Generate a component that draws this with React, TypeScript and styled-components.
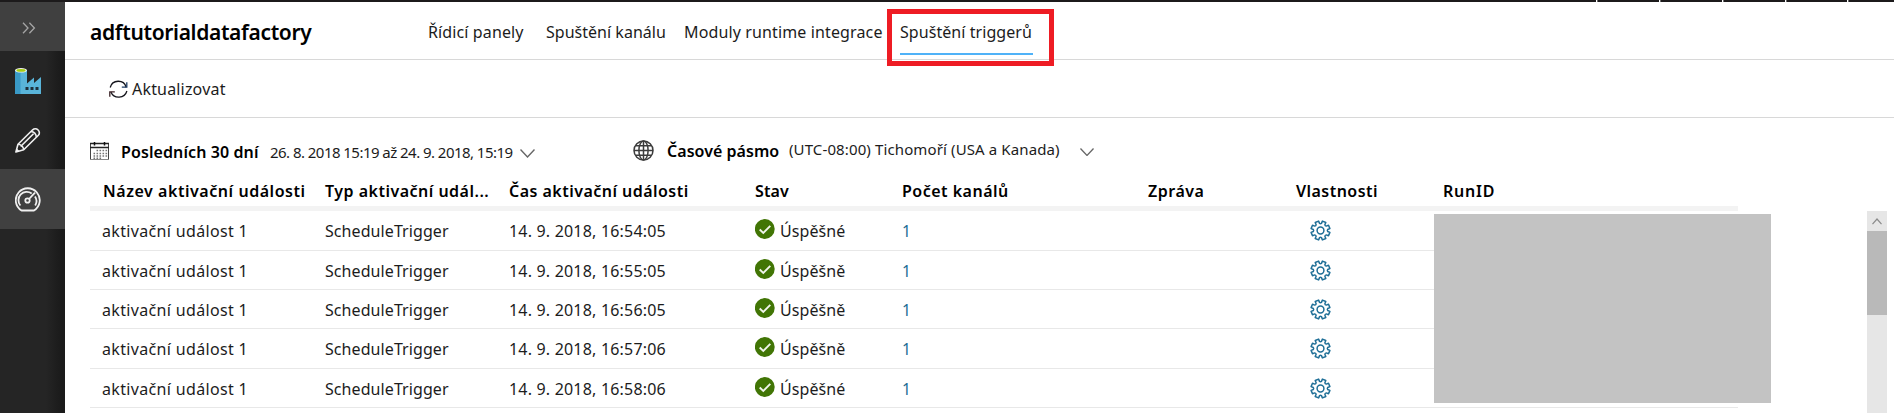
import React from 'react';
import styled, { createGlobalStyle } from 'styled-components';

const GlobalStyle = createGlobalStyle`
  * { box-sizing: border-box; }
  body {
    margin: 0;
    overflow: hidden;
    background: #fff;
    color: #1c1c1c;
    font-family: "Noto Sans", "Open Sans", sans-serif;
    font-size: 16px;
    line-height: 20px;
  }
  svg { display: block; flex: none; }
`;

const Page = styled.div`
  display: flex;
  flex-direction: column;
  height: 413px;
  overflow: hidden;
`;

const TopStrip = styled.div`
  flex: none;
  display: flex;
  justify-content: flex-end;
  height: 2px;
  background: #1c1a1b;
`;

const StripSegment = styled.div<{ $width: number }>`
  width: ${(p) => p.$width}px;
  border-left: 1px solid #fff;
  box-shadow: inset 1px 0 #6d6d6d;
`;

const Shell = styled.div`
  flex: 1;
  display: flex;
  min-height: 0;
`;

const Sidebar = styled.nav`
  flex: none;
  width: 65px;
  background: linear-gradient(to right, #252525 46px, #1a1a1a 62px);
`;

const NavItem = styled.div<{ $height: number; $top: number; $left?: number; $active?: boolean }>`
  height: ${(p) => p.$height}px;
  padding: ${(p) => p.$top}px 0 0 ${(p) => p.$left ?? 15}px;
  background: ${(p) => (p.$active ? '#404040' : 'transparent')};
`;

const Main = styled.main`
  flex: 1;
  min-width: 0;
  display: flex;
  flex-direction: column;
`;

const Header = styled.header`
  flex: none;
  display: flex;
  height: 58px;
  border-bottom: 1px solid #d8d8d8;
`;

const Title = styled.h1`
  width: 363px;
  margin: 0;
  padding: 15px 0 0 25px;
  font-size: 21px;
  font-weight: 600;
  line-height: 30px;
  letter-spacing: -0.34px;
  color: #000;
`;

const Tab = styled.div<{ $width: number; $tracking: number; $selected?: boolean }>`
  position: relative;
  width: ${(p) => p.$width}px;
  height: 33px;
  margin-top: 20px;
  border-bottom: 2px solid ${(p) => (p.$selected ? '#4fb2f8' : 'transparent')};
  letter-spacing: ${(p) => p.$tracking}px;
  white-space: nowrap;
`;

const Highlight = styled.div`
  position: absolute;
  top: -13px;
  left: -13px;
  width: 167px;
  height: 57px;
  border: 5px solid #ee1c24;
  z-index: 1;
`;

const Toolbar = styled.div`
  flex: none;
  display: flex;
  height: 58px;
  padding: 19px 0 0 44px;
  border-bottom: 1px solid #d8d8d8;
`;

const ToolbarLabel = styled.span`
  margin-left: 4px;
  letter-spacing: 0.18px;
`;

const Filters = styled.div`
  flex: none;
  display: flex;
  align-items: flex-start;
  height: 61px;
  padding: 22px 0 0 25px;
  white-space: nowrap;
`;

const Filter = styled.div<{ $width: number }>`
  display: flex;
  align-items: flex-start;
  width: ${(p) => p.$width}px;
`;

const FilterIcon = styled.div<{ $top: number; $width: number }>`
  flex: none;
  width: ${(p) => p.$width}px;
  padding-top: ${(p) => p.$top}px;
`;

const FilterName = styled.span<{ $width: number; $top: number; $tracking: number }>`
  flex: none;
  width: ${(p) => p.$width}px;
  padding-top: ${(p) => p.$top}px;
  font-weight: 600;
  letter-spacing: ${(p) => p.$tracking}px;
  color: #000;
`;

const FilterValue = styled.span<{ $width: number; $top: number; $tracking: number }>`
  flex: none;
  width: ${(p) => p.$width}px;
  margin-top: ${(p) => p.$top}px;
  font-size: 15px;
  letter-spacing: ${(p) => p.$tracking}px;
`;

const Content = styled.div`
  flex: 1;
  position: relative;
  display: flex;
  justify-content: space-between;
  padding: 0 7px 0 25px;
  min-height: 0;
`;

const Table = styled.div`
  width: 1648px;
`;

const columns = `
  display: grid;
  grid-template-columns: 223px 184px 246px 147px 246px 148px 147px 1fr;
  padding-left: 12px;
  white-space: nowrap;
`;

const HeadRow = styled.div`
  ${columns}
  height: 32px;
  padding-top: 2px;
  border-bottom: 5px solid #f3f3f3;
  font-weight: 600;
  color: #000;
`;

const HeadCell = styled.div<{ $tracking: number; $indent?: number }>`
  padding-left: ${(p) => p.$indent ?? 0}px;
  letter-spacing: ${(p) => p.$tracking}px;
`;

const Row = styled.div`
  ${columns}
  height: 39px;
  border-bottom: 1px solid #e8e8e8;
  &:nth-child(3n + 2) { height: 40px; }
`;

const Cell = styled.div<{ $tracking?: number }>`
  padding-top: 10px;
  letter-spacing: ${(p) => p.$tracking ?? 0}px;
`;

const StatusCell = styled.div`
  display: flex;
  padding-top: 8px;
`;

const StatusText = styled.span`
  padding: 2px 0 0 5px;
  letter-spacing: 0.09px;
`;

const CountLink = styled.a`
  padding: 10px 0 0;
  font-size: 15.5px;
  color: #1b6c94;
`;

const GearCell = styled.div`
  padding: 9px 0 0 14px;
`;

const Redaction = styled.div`
  position: absolute;
  top: 35px;
  left: 1369px;
  width: 337px;
  height: 189px;
  background: #c3c3c3;
`;

const Scrollbar = styled.div`
  width: 20px;
  margin-top: 32px;
  background: #e6e6e6;
`;

const ScrollUp = styled.div`
  height: 20px;
  padding: 7px 0 0 5px;
`;

const ScrollThumb = styled.div`
  height: 84px;
  background: #b9b9b9;
`;

const ExpandIcon = () => (
  <svg width="14" height="12" viewBox="0 0 14 12" fill="none" stroke="#a5a5a5" strokeWidth="1.3">
    <path d="M1 .7 6 6 1 11.3M7.4.7l5 5.3-5 5.3" />
  </svg>
);

const FactoryIcon = () => (
  <svg width="26" height="26" viewBox="0 0 26 26">
    <path d="M0 2h12v24H0z" fill="#3999c6" />
    <path d="M5.5 2H12v13.5l7-6V15l7-6v17H5.5z" fill="#59b4d9" />
    <ellipse cx="6" cy="2.3" rx="6" ry="2.3" fill="#f2f2f2" />
    <ellipse cx="6" cy="2.4" rx="4.6" ry="1.4" fill="#a4cd12" />
    <path d="M10.5 19h3v3h-3zM15.5 19h3v3h-3zM20.5 19h3v3h-3z" fill="#1e2f3a" />
  </svg>
);

const PencilIcon = () => (
  <svg width="26" height="25" viewBox="0 0 26 25" fill="none" stroke="#f0f0f0" strokeWidth="1.6" strokeLinejoin="round">
    <path d="M.9 24 3 16.2 17.7 1.8C19 .6 21.5.5 23.1 2c1.6 1.6 1.7 3.9.3 5.3L8.7 21.8z" />
    <path d="M3 16.2c2.5 0 5.7 2.6 5.7 5.6M16 3.5c2.6.3 5 2.5 5.4 5.4M5.6 18.5 18.5 5.8" />
    <path d="M1.5 21.4l2.2 2" />
  </svg>
);

const GaugeIcon = () => (
  <svg width="26" height="25" viewBox="0 0 26 25" fill="none" stroke="#f0f0f0" strokeWidth="1.8">
    <path d="M6.5 23.5a12 12 0 1 1 12.5 0z" strokeLinejoin="round" />
    <path d="M5.4 18.5a8.3 8.3 0 0 1 11.3-12M20 9.5a8.3 8.3 0 0 1 .2 9" />
    <circle cx="12.5" cy="13.5" r="2.2" />
    <path d="M14 12 20 5.6" />
  </svg>
);

const RefreshIcon = () => (
  <svg width="19" height="21" viewBox="0 -1 19 21" fill="none" stroke="#15151c" strokeWidth="1.3">
    <path d="M1.2 7.5a8.3 8.3 0 0 1 16-.3M17.9 11a8.5 8.5 0 0 1-16 .9" />
    <path d="M17.8 2.2v5h-5" stroke="#1d3a63" />
    <path d="M.8 16.8v-5h5" stroke="#3b2226" />
  </svg>
);

const CalendarIcon = () => (
  <svg width="19" height="18" viewBox="0 0 19 18" fill="none">
    <path d="M.5 17.5v-16h18v16" stroke="#444" />
    <path d="M0 17.5h19" stroke="#888" />
    <path d="M0 1.5h19M0 5.5h19" stroke="#222" strokeWidth="1.3" />
    <path d="M4.500 0v3.500M14.500 0v3.500" stroke="#111" strokeWidth="1.5" />
    <path d="M6.500 8.500h11M3.500 11.500h14M3.500 14h14M3.500 16.300h9" stroke="#777" strokeWidth="1.5" strokeDasharray="1.6 1.4" />
  </svg>
);

const GlobeIcon = () => (
  <svg width="21" height="21" viewBox="0 0 21 21" fill="none" stroke="#3c3c3c" strokeWidth="1.5">
    <circle cx="10.5" cy="10.5" r="9.5" />
    <ellipse cx="10.5" cy="10.5" rx="4.6" ry="9.5" />
    <path d="M10.5 1v19M1 10.5h19M2.5 5.8h16M2.5 15.2h16" />
  </svg>
);

const ChevronDown = ({ width = 15 }: { width?: number }) => (
  <svg width={width} height={width * 0.6} viewBox="0 0 15 9" fill="none" stroke="#666" strokeWidth="1.4">
    <path d="M.5.6l7 7.4 7-7.4" />
  </svg>
);

const CheckIcon = () => (
  <svg width="20" height="20" viewBox="0 0 20 20">
    <circle cx="9.8" cy="10" r="9.9" fill="#417505" />
    <path d="M4.7 10.5l3.6 3.5 7-7.2" fill="none" stroke="#f1f5ec" strokeWidth="1.9" />
  </svg>
);

// Outline of an eight-toothed gear, built around the centre of a 21px box.
const gearPath = Array.from({ length: 8 }, (_, i) => {
  const at = (r: number, deg: number) => {
    const a = ((i * 45 + 22.5 + deg) * Math.PI) / 180;
    return `${(10.5 + r * Math.cos(a)).toFixed(2)} ${(10.5 + r * Math.sin(a)).toFixed(2)}`;
  };
  return `${i ? 'L' : 'M'}${at(7.2, -15)}L${at(9.6, -11)}L${at(9.6, 11)}L${at(7.2, 15)}Q${at(6.5, 22.5)} ${at(7.2, 30)}`;
}).join('') + 'Z';

const GearIcon = () => (
  <svg width="21" height="21" viewBox="0 0 21 21" fill="none" stroke="#1f6f97" strokeWidth="1.5" strokeLinejoin="round">
    <path d={gearPath} />
    <circle cx="10.5" cy="10.5" r="3.4" />
  </svg>
);

const ScrollArrow = () => (
  <svg width="10" height="7" viewBox="0 0 10 7" fill="none" stroke="#8b8b8b" strokeWidth="1.2">
    <path d="M.5 6.2 5 1l4.5 5.2" />
  </svg>
);

const headings = [
  { label: 'Název aktivační události', tracking: 0.55, indent: 1 },
  { label: 'Typ aktivační udál...', tracking: 0.49 },
  { label: 'Čas aktivační události', tracking: 0.47 },
  { label: 'Stav', tracking: 0.11 },
  { label: 'Počet kanálů', tracking: 0.49 },
  { label: 'Zpráva', tracking: 0.51 },
  { label: 'Vlastnosti', tracking: 0.46 },
  { label: 'RunID', tracking: 0.77 },
];

const runs = [
  { time: '14. 9. 2018, 16:54:05', status: 'Úspěšné' },
  { time: '14. 9. 2018, 16:55:05', status: 'Úspěšně' },
  { time: '14. 9. 2018, 16:56:05', status: 'Úspěšně' },
  { time: '14. 9. 2018, 16:57:06', status: 'Úspěšně' },
  { time: '14. 9. 2018, 16:58:06', status: 'Úspěšné' },
];

export default function App() {
  return (
    <Page>
      <GlobalStyle />
      <TopStrip>
        {[63, 63, 63, 62, 47].map((w, i) => (
          <StripSegment key={i} $width={w} />
        ))}
      </TopStrip>
      <Shell>
        <Sidebar>
          <NavItem $height={49} $top={20} $left={22} $active><ExpandIcon /></NavItem>
          <NavItem $height={59} $top={17}><FactoryIcon /></NavItem>
          <NavItem $height={59} $top={18}><PencilIcon /></NavItem>
          <NavItem $height={60} $top={18} $active><GaugeIcon /></NavItem>
        </Sidebar>
        <Main>
          <Header>
            <Title>adftutorialdatafactory</Title>
            <Tab $width={118} $tracking={0.12}>Řídicí panely</Tab>
            <Tab $width={138} $tracking={0.02}>Spuštění kanálu</Tab>
            <Tab $width={216} $tracking={0.13}>Moduly runtime integrace</Tab>
            <Tab $width={133} $tracking={0.06} $selected>
              Spuštění triggerů
              <Highlight />
            </Tab>
          </Header>
          <Toolbar>
            <RefreshIcon />
            <ToolbarLabel>Aktualizovat</ToolbarLabel>
          </Toolbar>
          <Filters>
            <Filter $width={543}>
              <FilterIcon $width={31} $top={2}><CalendarIcon /></FilterIcon>
              <FilterName $width={149} $top={2} $tracking={0.1}>Posledních 30 dní</FilterName>
              <FilterValue $width={250} $top={2} $tracking={-0.54}>
                26. 8. 2018 15:19 až 24. 9. 2018, 15:19
              </FilterValue>
              <FilterIcon $width={15} $top={9}><ChevronDown /></FilterIcon>
            </Filter>
            <Filter $width={470}>
              <FilterIcon $width={34} $top={0}><GlobeIcon /></FilterIcon>
              <FilterName $width={122} $top={1} $tracking={0.04}>Časové pásmo</FilterName>
              <FilterValue $width={291} $top={-1} $tracking={0.12}>
                (UTC-08:00) Tichomoří (USA a Kanada)
              </FilterValue>
              <FilterIcon $width={15} $top={8}><ChevronDown width={14} /></FilterIcon>
            </Filter>
          </Filters>
          <Content>
            <Table>
              <HeadRow>
                {headings.map((h) => (
                  <HeadCell key={h.label} $tracking={h.tracking} $indent={h.indent}>{h.label}</HeadCell>
                ))}
              </HeadRow>
              {runs.map((run) => (
                <Row key={run.time}>
                  <Cell $tracking={0.34}>aktivační událost 1</Cell>
                  <Cell $tracking={0.08}>ScheduleTrigger</Cell>
                  <Cell $tracking={0.19}>{run.time}</Cell>
                  <StatusCell>
                    <CheckIcon />
                    <StatusText>{run.status}</StatusText>
                  </StatusCell>
                  <CountLink>1</CountLink>
                  <Cell />
                  <GearCell><GearIcon /></GearCell>
                </Row>
              ))}
            </Table>
            <Redaction />
            <Scrollbar>
              <ScrollUp><ScrollArrow /></ScrollUp>
              <ScrollThumb />
            </Scrollbar>
          </Content>
        </Main>
      </Shell>
    </Page>
  );
}
